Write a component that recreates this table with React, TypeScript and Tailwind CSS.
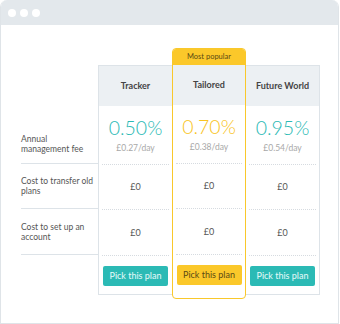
type Plan = {
  name: string;
  rate: string;
  daily: string;
  popular?: boolean;
};

const plans: Plan[] = [
  { name: "Tracker", rate: "0.50%", daily: "£0.27/day" },
  { name: "Tailored", rate: "0.70%", daily: "£0.38/day", popular: true },
  { name: "Future World", rate: "0.95%", daily: "£0.54/day" },
];

const labels = [
  { text: "Annual management fee", cls: "h-[59px] pt-[19px]" },
  { text: "Cost to transfer old plans", cls: "h-[45px]" },
  { text: "Cost to set up an account", cls: "h-[46px]" },
];

function PlanColumn({ plan, first, last }: { plan: Plan; first?: boolean; last?: boolean }) {
  const hot = !!plan.popular;
  const accent = hot ? "text-[#f9c423]" : "text-[#2bbab5]";
  return (
    <div
      className={
        hot
          ? "relative z-10 w-[74px] flex flex-col border border-[#f9c82b] rounded-[4px] overflow-hidden bg-white"
          : `w-[74px] mt-[17px] h-[230px] flex flex-col border-b border-t border-[#dde3e8] bg-white ${first ? "border-l" : ""} ${last ? "border-r w-[73px]" : ""}`
      }
    >
      {hot && (
        <div className="h-[16px] bg-[#fbc82a] text-[7.5px] text-[#5b4a14] flex items-center justify-center">
          Most popular
        </div>
      )}
      <div className="h-[40px] shrink-0 bg-[#ecf0f3] flex items-center justify-center text-[9px] font-bold text-[#444]">
        {plan.name}
      </div>
      <div className="h-[59px] mx-[3px] border-b border-dotted border-[#d6dbe0] flex flex-col items-center justify-center pt-[3px]">
        <div className={`text-[19.5px] font-light leading-none ${accent}`}>{plan.rate}</div>
        <div className="text-[8.5px] text-[#a8a8a8] mt-[5px]">{plan.daily}</div>
      </div>
      <div className="h-[45px] mx-[3px] border-b border-dotted border-[#d6dbe0] flex items-center justify-center text-[9px] text-[#555]">
        £0
      </div>
      <div className="h-[46px] mx-[3px] border-b border-dotted border-[#d6dbe0] flex items-center justify-center text-[9px] text-[#555]">
        £0
      </div>
      <div className={`flex justify-center pt-[10px] ${hot ? "pb-[13px]" : ""}`}>
        <button
          className={`w-[65px] h-[20px] rounded-[2px] text-[9px] ${
            hot ? "bg-[#fbc82a] text-[#5b4a14]" : "bg-[#2bbab5] text-[#e8fbfa]"
          }`}
        >
          Pick this plan
        </button>
      </div>
    </div>
  );
}

export default function App() {
  return (
    <div className="w-[340px] h-[324px] bg-white font-['Lato',sans-serif]">
      <div className="w-[339px] h-[324px] border border-t-0 border-[#dfe4e8] rounded-t-[7px] overflow-hidden flex flex-col">
        <div className="h-[25px] shrink-0 bg-[#e3e8ec] flex items-center gap-[4px] pl-[7px]">
          <span className="w-[8px] h-[8px] rounded-full bg-white" />
          <span className="w-[8px] h-[8px] rounded-full bg-white" />
          <span className="w-[8px] h-[8px] rounded-full bg-white" />
        </div>
        <div className="flex pt-[23px] pl-[20px]">
          <div className="w-[77px] pt-[57px]">
            {labels.map((l) => (
              <div
                key={l.text}
                className={`${l.cls} border-b border-[#dde3e8] flex items-center pr-[4px] text-[8.5px] leading-[10px] text-[#555]`}
              >
                {l.text}
              </div>
            ))}
          </div>
          <PlanColumn plan={plans[0]} first />
          <PlanColumn plan={plans[1]} />
          <PlanColumn plan={plans[2]} last />
        </div>
      </div>
    </div>
  );
}
